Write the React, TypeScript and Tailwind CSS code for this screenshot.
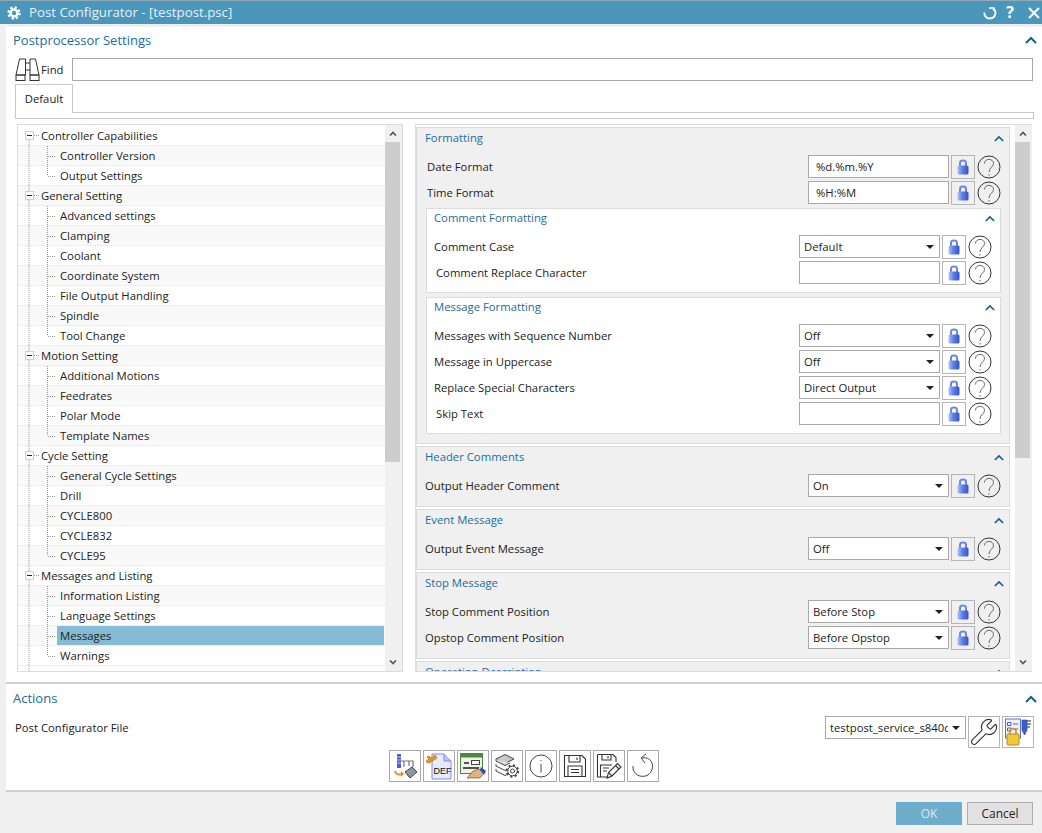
import { Wrench } from 'lucide-react';
import type { ReactNode } from 'react';

interface TreeItem {
  label: string;
  parent?: boolean;
  last?: boolean;
}

const treeItems: TreeItem[] = [
  { label: 'Controller Capabilities', parent: true },
  { label: 'Controller Version' },
  { label: 'Output Settings', last: true },
  { label: 'General Setting', parent: true },
  { label: 'Advanced settings' },
  { label: 'Clamping' },
  { label: 'Coolant' },
  { label: 'Coordinate System' },
  { label: 'File Output Handling' },
  { label: 'Spindle' },
  { label: 'Tool Change', last: true },
  { label: 'Motion Setting', parent: true },
  { label: 'Additional Motions' },
  { label: 'Feedrates' },
  { label: 'Polar Mode' },
  { label: 'Template Names', last: true },
  { label: 'Cycle Setting', parent: true },
  { label: 'General Cycle Settings' },
  { label: 'Drill' },
  { label: 'CYCLE800' },
  { label: 'CYCLE832' },
  { label: 'CYCLE95', last: true },
  { label: 'Messages and Listing', parent: true },
  { label: 'Information Listing' },
  { label: 'Language Settings' },
  { label: 'Messages' },
  { label: 'Warnings', last: true },
];

function Chevron({ big = false }: { big?: boolean }) {
  return (
    <svg width={big ? 12 : 10} height={big ? 8 : 7} viewBox="0 0 12 8" fill="none">
      <path d="M1 7 L6 2 L11 7" stroke="#0f6488" strokeWidth="2" />
    </svg>
  );
}

function LockIcon() {
  return (
    <svg width="12" height="16" viewBox="0 0 12 16">
      <defs>
        <linearGradient id="lockBody" x1="0" x2="1" y1="0" y2="0">
          <stop offset="0" stopColor="#b4c3f6" />
          <stop offset="0.45" stopColor="#5b7fe8" />
          <stop offset="1" stopColor="#3553c4" />
        </linearGradient>
      </defs>
      <path d="M3 7 V4 C3 0.8 9 0.8 9 4 V7" fill="none" stroke="#6a86e0" strokeWidth="2" />
      <rect x="0.5" y="6.5" width="11" height="9" rx="1.5" fill="url(#lockBody)" />
    </svg>
  );
}

function LockButton() {
  return (
    <div className="ml-[2px] flex h-[24px] w-[24px] shrink-0 items-center justify-center border border-[#b5b5b5]">
      <LockIcon />
    </div>
  );
}

function HelpButton() {
  return (
    <svg className="ml-[2px] shrink-0" width="24" height="24" viewBox="0 0 24 24" fill="none">
      <circle cx="12" cy="12" r="11" stroke="#333" strokeWidth="1" />
      <path d="M7.5 8.5 C7.5 3 16.5 3 16.5 8.5 C16.5 12 12 12.5 12 17" stroke="#666" strokeWidth="1" />
      <path d="M12 19 V20.5" stroke="#666" strokeWidth="1" />
    </svg>
  );
}

function SelectArrow() {
  return (
    <svg width="8" height="4" viewBox="0 0 8 4" className="shrink-0">
      <path d="M0 0 H8 L4 4 Z" fill="#222" />
    </svg>
  );
}

function Field({ value, select = false }: { value?: string; select?: boolean }) {
  return (
    <div
      className={`flex h-[23px] w-[141px] shrink-0 items-center justify-between border border-[#a9a9a9] bg-white pr-[5px] ${select ? 'pl-[4px]' : 'pl-[7px]'}`}
    >
      <span>{value}</span>
      {select && <SelectArrow />}
    </div>
  );
}

function SettingRow({ label, value, select = false, labelClass }: { label: string; value?: string; select?: boolean; labelClass: string }) {
  return (
    <div className="flex h-[23px] items-center">
      <span className={`flex-1 ${labelClass}`}>{label}</span>
      <Field value={value} select={select} />
      <LockButton />
      <HelpButton />
    </div>
  );
}

function Section({ title, children }: { title: string; children: ReactNode }) {
  return (
    <section className="shrink-0 border border-[#dcdcdc] bg-[#f0f0f0] pr-[8px] pb-[9px]">
      <div className="flex h-[21px] items-center justify-between pl-[8px] text-[#1b6d9b]">
        <span className="pb-[2px]">{title}</span>
        <span className="mr-[-3px]">
          <Chevron />
        </span>
      </div>
      <div className="mt-[6px] flex flex-col gap-[3px]">{children}</div>
    </section>
  );
}

function InnerGroup({ title, children }: { title: string; children: ReactNode }) {
  return (
    <div className="ml-[9px] border border-[#dcdcdc] bg-white pr-[8px] pb-[8px]">
      <div className="flex h-[19px] items-center justify-between pl-[7px] text-[#1b6d9b]">
        <span className="pb-[2px]">{title}</span>
        <span className="mr-[-3px]">
          <Chevron />
        </span>
      </div>
      <div className="mt-[7px] flex flex-col gap-[3px]">{children}</div>
    </div>
  );
}

// 트리 연결선: 점선으로 그린다
function TreeLines({ item, first }: { item: TreeItem; first: boolean }) {
  if (item.parent) {
    return (
      <svg width="23" height="20" viewBox="0 0 23 20" className="shrink-0" fill="none">
        {!first && <path d="M11 0 V5" stroke="#999" strokeDasharray="1 1" />}
        <path d="M11 14 V20" stroke="#999" strokeDasharray="1 1" />
        <rect x="7.5" y="5.5" width="8" height="8" fill="#fff" stroke="#d0d0d0" />
        <path d="M9 9.5 H14" stroke="#222" />
        <path d="M16 9.5 H21" stroke="#999" strokeDasharray="1 1" />
      </svg>
    );
  }
  return (
    <svg width="39" height="20" viewBox="0 0 39 20" className="shrink-0" fill="none">
      <path d="M11 0 V20" stroke="#999" strokeDasharray="1 1" />
      <path d={item.last ? 'M29.5 0 V10' : 'M29.5 0 V20'} stroke="#999" strokeDasharray="1 1" />
      <path d="M30 10.5 H38" stroke="#999" strokeDasharray="1 1" />
    </svg>
  );
}

function ScrollBar({ height }: { height: string }) {
  return (
    <div className="flex w-[17px] shrink-0 flex-col bg-[#f0f0f0]">
      <div className="flex h-[17px] shrink-0 items-center justify-center pr-[2px]">
        <svg width="8" height="5" viewBox="0 0 8 5" fill="none">
          <path d="M1 4.5 L4 1.5 L7 4.5" stroke="#555" strokeWidth="1.6" />
        </svg>
      </div>
      <div className={`w-[15px] shrink-0 bg-[#cdcdcd] ${height}`} />
      <div className="flex-1" />
      <div className="flex h-[17px] shrink-0 items-center justify-center pr-[2px]">
        <svg width="8" height="5" viewBox="0 0 8 5" fill="none">
          <path d="M1 0.5 L4 3.5 L7 0.5" stroke="#555" strokeWidth="1.6" />
        </svg>
      </div>
    </div>
  );
}

function Tree() {
  return (
    <div className="flex h-[548px] w-[386px] shrink-0 border border-[#dcdcdc]">
      <div className="min-w-0 flex-1 overflow-hidden pt-px">
        {treeItems.map((item, i) => {
          const selected = item.label === 'Messages';
          return (
            <div
              key={item.label}
              className={`flex h-[20px] items-center border-b border-[#eeeeee] ${i % 2 === 1 ? 'bg-[#f9f9f9]' : 'bg-white'}`}
            >
              <TreeLines item={item} first={i === 0} />
              <span className={`flex h-[19px] flex-1 items-center ${item.parent ? '' : 'pl-[3px]'} ${selected ? 'mr-px bg-[#85bbd4]' : ''}`}>
                {item.label}
              </span>
            </div>
          );
        })}
        <div className="flex h-[20px]">
          <svg width="23" height="20" viewBox="0 0 23 20" fill="none">
            <path d="M11 0 V20" stroke="#999" strokeDasharray="1 1" />
          </svg>
        </div>
      </div>
      <ScrollBar height="h-[320px]" />
    </div>
  );
}

function SettingsPanel() {
  return (
    <div className="flex h-[548px] w-[617px] shrink-0 border-y border-l border-[#dcdcdc]">
      <div className="flex min-w-0 flex-1 flex-col overflow-hidden pt-[2px]">
        <div className="flex w-[594px] flex-col gap-[2px]">
          <Section title="Formatting">
            <SettingRow label="Date Format" value="%d.%m.%Y" labelClass="pl-[10px]" />
            <SettingRow label="Time Format" value="%H:%M" labelClass="pl-[10px]" />
            <div className="mt-[1px] flex flex-col gap-[4px]">
              <InnerGroup title="Comment Formatting">
                <SettingRow label="Comment Case" value="Default" select labelClass="pl-[7px]" />
                <SettingRow label="Comment Replace Character" labelClass="pl-[9px]" />
              </InnerGroup>
              <InnerGroup title="Message Formatting">
                <SettingRow label="Messages with Sequence Number" value="Off" select labelClass="pl-[7px]" />
                <SettingRow label="Message in Uppercase" value="Off" select labelClass="pl-[7px]" />
                <SettingRow label="Replace Special Characters" value="Direct Output" select labelClass="pl-[7px]" />
                <SettingRow label="Skip Text" labelClass="pl-[9px]" />
              </InnerGroup>
            </div>
          </Section>
          <Section title="Header Comments">
            <SettingRow label="Output Header Comment" value="On" select labelClass="pl-[8px]" />
          </Section>
          <Section title="Event Message">
            <SettingRow label="Output Event Message" value="Off" select labelClass="pl-[8px]" />
          </Section>
          <Section title="Stop Message">
            <SettingRow label="Stop Comment Position" value="Before Stop" select labelClass="pl-[8px]" />
            <SettingRow label="Opstop Comment Position" value="Before Opstop" select labelClass="pl-[8px]" />
          </Section>
          <Section title="Operation Description">
            <div className="h-[23px]" />
          </Section>
        </div>
      </div>
      <ScrollBar height="h-[316px]" />
    </div>
  );
}

function Binoculars() {
  return (
    <svg width="25" height="23" viewBox="0 0 25 23" fill="none" stroke="#333" strokeWidth="1">
      <path d="M4.5 1 H10.5 V17 H1 Z" />
      <path d="M15 1 H20.5 L24 17 H15 Z" />
      <path d="M10.5 5 H15 M10.5 12 H15" />
      <rect x="1" y="17" width="9" height="5.5" />
      <rect x="15" y="17" width="9" height="5.5" />
    </svg>
  );
}

function ToolButton({ children }: { children: ReactNode }) {
  return (
    <div className="flex h-[32px] w-[32px] items-center justify-center border border-[#a9a9a9] bg-white">
      {children}
    </div>
  );
}

function ToolIcons() {
  return (
    <>
      <ToolButton>
        <svg width="26" height="26" viewBox="0 0 26 26" fill="none">
          <rect x="5" y="1" width="4" height="14" fill="#4a62c8" />
          <path d="M5 4 H9 M5 7 H9 M5 10 H9" stroke="#b9c4ee" />
          <path d="M9 8 H21 V14 M12 8 V14 M17 8 V13" stroke="#777" strokeWidth="1.2" />
          <path d="M13 19 L20 14 L25 19 L18 25 Z" fill="#8f979e" stroke="#444" />
          <path d="M3 18 C4 22 7 22 10 21" stroke="#f08a24" strokeWidth="2" />
          <path d="M9 18 L12 21 L9 24 Z" fill="#f08a24" />
        </svg>
      </ToolButton>
      <ToolButton>
        <svg width="28" height="28" viewBox="0 0 28 28" fill="none">
          <path d="M7 2 H19 L26 9 V27 H7 Z" fill="#e6ebfc" stroke="#7d8fd8" />
          <path d="M19 2 V9 H26" fill="#b9c6f2" stroke="#7d8fd8" />
          <path d="M1 9 C2 12 5 11 6 10 L12 6 L10 3 L6 6 C5 4 3 4 2 5 L4 7 Z" fill="#e09a24" stroke="#a96a10" strokeWidth="0.6" />
          <text x="8.5" y="22" fontSize="9" fill="#111" fontFamily="'Liberation Sans', sans-serif">
            DEF
          </text>
        </svg>
      </ToolButton>
      <ToolButton>
        <svg width="28" height="28" viewBox="0 0 28 28" fill="none">
          <rect x="1.5" y="1.5" width="22" height="20" fill="#eef2e8" stroke="#4c8a3a" />
          <rect x="1.5" y="1.5" width="22" height="4" fill="#4c8a3a" />
          <path d="M5 11 H10 M4 16 H20" stroke="#222" strokeWidth="1.5" />
          <rect x="12.5" y="8.5" width="8" height="4" fill="#fff" stroke="#444" />
          <path d="M8 26 L14 19 L20 17 L25 21 L21 26 L14 26 Z" fill="#e3b27c" stroke="#7b5427" strokeWidth="0.7" />
          <path d="M22 15 L27 19 L25 23 L21 18 Z" fill="#2d4fb5" />
        </svg>
      </ToolButton>
      <ToolButton>
        <svg width="26" height="26" viewBox="0 0 26 26" fill="none" stroke="#444" strokeWidth="1">
          <path d="M2 6 L11 1.5 L20 6 L11 10.5 Z" fill="#c9c9c9" />
          <path d="M2 6 V8 L11 12.5 L16 10" fill="#ddd" />
          <path d="M2 11 V13 L11 17.5 L13 16.5" />
          <path d="M2 16 V18 L11 22.5 L13 21.5" />
          <circle cx="18.5" cy="18" r="5.4" strokeWidth="2.6" strokeDasharray="2 2.2" />
          <circle cx="18.5" cy="18" r="4.8" fill="#fff" />
          <circle cx="18.5" cy="18" r="2" />
        </svg>
      </ToolButton>
      <ToolButton>
        <svg width="24" height="24" viewBox="0 0 24 24" fill="none" stroke="#444" strokeWidth="1">
          <circle cx="12" cy="12" r="11" />
          <path d="M12 10 V18.5 M12 6 V7" />
        </svg>
      </ToolButton>
      <ToolButton>
        <svg width="24" height="24" viewBox="0 0 24 24" fill="none" stroke="#333" strokeWidth="1.1">
          <path d="M1.5 1.5 H19 L22.5 5 V22.5 H1.5 Z" />
          <path d="M6 1.5 V8 H17 V1.5 M14 3.5 V6" />
          <path d="M5 22.5 V12 H19 V22.5 M8 15.5 H16 M8 18.5 H16" />
        </svg>
      </ToolButton>
      <ToolButton>
        <svg width="26" height="26" viewBox="0 0 26 26" fill="none" stroke="#333" strokeWidth="1.1">
          <path d="M1.5 1.5 H17 L20 4.5 V9 M14 24 H1.5 V1.5" />
          <path d="M6 1.5 V7 H15 V1.5 M12 3 V5.5" />
          <path d="M4.5 24 V12 H16 M7 15 H13 M7 18 H11" />
          <path d="M11 25 L12.5 19.5 L21.5 10.5 L25 14 L16 23 Z" fill="#fff" />
          <path d="M12.5 19.5 L16 23 M19.5 12.5 L23 16" />
        </svg>
      </ToolButton>
      <ToolButton>
        <svg width="24" height="26" viewBox="0 0 24 26" fill="none" stroke="#444" strokeWidth="1">
          <path d="M11 5 C22 3 25 16 17 22 C10 26 1 21 2 13" />
          <path d="M15 1 L10 5 L14 10" />
        </svg>
      </ToolButton>
    </>
  );
}

function ListLockIcon() {
  return (
    <svg width="28" height="28" viewBox="0 0 28 28" fill="none">
      <rect x="1.5" y="1" width="15" height="19" fill="#eef1fb" stroke="#5c74cc" />
      <path d="M3.5 4.5 H7 V7.5 H3.5 Z M3.5 10 H7 V13 H3.5 Z" stroke="#4a62c0" />
      <path d="M9 6 H14 M9 11 H14" stroke="#4a62c0" />
      <path d="M18 2 H23 V12 L20.5 17 L18 12 Z" fill="#3f5fd0" stroke="#233b9c" strokeWidth="0.6" />
      <path d="M23 3 H27 M23 6 H27 M23 9 H26" stroke="#222" />
      <path d="M6 16 V13.5 C6 9.5 12 9.5 12 13.5 V16" stroke="#c69a1e" strokeWidth="1.6" />
      <rect x="3" y="16" width="12" height="11" rx="1" fill="#f0c93c" stroke="#b78c16" />
    </svg>
  );
}

export default function App() {
  return (
    <div className="flex h-[833px] w-[1042px] flex-col overflow-hidden bg-[#f0f0f0] font-['Open_Sans',sans-serif] text-[11.3px] leading-[17.25px] text-[#222]">
      {/* 타이틀 바 */}
      <header className="flex h-[24px] shrink-0 items-center border-t border-[#8fa9b5] bg-[#4b97bc] pr-[2px] pl-[7px] text-[#e6f0f5]">
        <svg width="14" height="14" viewBox="0 0 14 14" fill="none" stroke="#fff">
          <circle cx="7" cy="7" r="3.5" strokeWidth="2.4" />
          <circle cx="7" cy="7" r="5.5" strokeWidth="2.4" strokeDasharray="2.2 2.1" />
        </svg>
        <span className="ml-[8px] flex-1 text-[13.25px]">Post Configurator - [testpost.psc]</span>
        <svg width="14" height="14" viewBox="0 0 14 14" fill="none" stroke="#fff" strokeWidth="1.8">
          <path d="M10 2.5 C14 5 13 12 7 12.5 C3 12.5 1 9.5 1.5 6.5" />
          <path d="M6 2 H11 V5" strokeWidth="1.4" />
        </svg>
        <span className="ml-[8px] w-[10px] text-center text-[16px] font-bold text-white">?</span>
        <svg className="ml-[13px]" width="12" height="12" viewBox="0 0 12 12" stroke="#fff" strokeWidth="2">
          <path d="M1 1 L11 11 M11 1 L1 11" />
        </svg>
      </header>

      <main className="mt-[3px] ml-[6px] flex min-h-0 flex-1 flex-col bg-white">
        {/* 상단: 설정 영역 */}
        <div className="h-[657px] shrink-0 border-b-2 border-[#d0d0d0]">
          <div className="flex h-[26px] items-center justify-between pr-[5px] pl-[7px] text-[13px] text-[#1b6d9b]">
            <span className="pt-[2px]">Postprocessor Settings</span>
            <Chevron big />
          </div>
          <div className="mt-[5px] flex h-[23px] items-center pr-[9px] pl-[9px]">
            <Binoculars />
            <span className="ml-[1px] w-[31px]">Find</span>
            <div className="h-[23px] flex-1 border border-[#a9a9a9]" />
          </div>
          <div className="mt-[3px] mr-[8px] ml-[9px]">
            <div className="flex h-[29px]">
              <div className="flex w-[58px] items-center justify-center border-x border-t border-[#c8c8c8]">Default</div>
              <div className="h-px flex-1 translate-y-[28px] bg-[#c8c8c8]" />
            </div>
            <div className="h-[6px] border-x border-b border-[#c8c8c8]" />
          </div>
          <div className="mt-[5px] ml-[11px] flex">
            <Tree />
            <div className="w-[12px] shrink-0" />
            <SettingsPanel />
          </div>
        </div>

        {/* 하단: 액션 영역 */}
        <div className="h-[108px] shrink-0 border-b-2 border-[#d0d0d0] pt-[1px]">
          <div className="flex h-[27px] items-center justify-between pr-[5px] pl-[7px] text-[13px] text-[#1b6d9b]">
            <span>Actions</span>
            <Chevron big />
          </div>
          <div className="mt-[4px] flex h-[31px] items-start pr-[8px] pl-[9px]">
            <span className="flex h-[23px] flex-1 items-center">Post Configurator File</span>
            <div className="flex h-[23px] w-[141px] items-center justify-between border border-[#a9a9a9] pr-[5px] pl-[4px]">
              <span className="w-[118px] overflow-hidden whitespace-nowrap">testpost_service_s840c</span>
              <SelectArrow />
            </div>
            <div className="ml-[2px] flex h-[32px] w-[32px] items-center justify-center border border-[#b5b5b5]">
              <Wrench size={30} strokeWidth={0.9} color="#333" />
            </div>
            <div className="ml-[2px] flex h-[32px] w-[32px] items-center justify-center border border-[#b5b5b5]">
              <ListLockIcon />
            </div>
          </div>
          <div className="mt-[3px] flex justify-center gap-[2px]">
            <ToolIcons />
          </div>
        </div>

        {/* 확인 / 취소 버튼 */}
        <div className="flex flex-1 items-start justify-end gap-[5px] bg-[#f0f0f0] pt-[10px] pr-[9px] text-[12px]">
          <div className="flex h-[23px] w-[66px] items-center justify-center bg-[#6eaecb] text-[#d8ebf3]">OK</div>
          <div className="flex h-[23px] w-[66px] items-center justify-center border border-[#adadad] bg-[#e1e1e1]">Cancel</div>
        </div>
      </main>
    </div>
  );
}
